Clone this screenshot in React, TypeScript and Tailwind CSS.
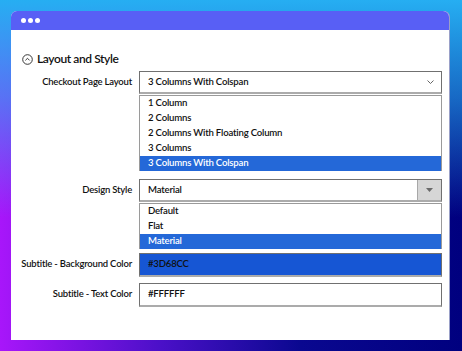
const font = { fontFamily: '"Lato", "Noto Sans", sans-serif' };

function SelectBox({ value, button }: { value: string; button?: boolean }) {
  return (
    <div className="flex h-[23px] items-stretch border border-[#707070] border-b-2 border-b-[#ababab] bg-white">
      <div className="flex flex-1 items-center pl-[8px] text-[9.6px] font-semibold tracking-[-0.2px] text-[#111]">
        {value}
      </div>
      {button ? (
        <div className="flex w-[24px] items-center justify-center border-l border-[#a8a8a8] bg-[#d6d6d6]">
          <svg width="7" height="4" viewBox="0 0 7 4">
            <path d="M0 0h7L3.5 4z" fill="#6a6a6a" />
          </svg>
        </div>
      ) : (
        <div className="flex w-[22px] items-center justify-center">
          <svg width="7" height="4" viewBox="0 0 7 4" fill="none">
            <path d="M0.5 0.5L3.5 3.5L6.5 0.5" stroke="#555" strokeWidth="0.9" />
          </svg>
        </div>
      )}
    </div>
  );
}

function ListBox({ items, selected }: { items: string[]; selected: number }) {
  return (
    <div className="mt-px flex flex-col border-x border-t border-[#9a9a9a] bg-white">
      {items.map((item, i) => (
        <div
          key={item}
          className={
            i === selected
              ? "flex h-[15px] items-center bg-[#2468d8] pl-[8px] text-[9.6px] font-semibold tracking-[-0.2px] text-white"
              : "flex h-[15px] items-center pl-[8px] text-[9.6px] font-semibold tracking-[-0.2px] text-[#111]"
          }
        >
          {item}
        </div>
      ))}
    </div>
  );
}

function Row({ label, children, className }: { label: string; children: React.ReactNode; className?: string }) {
  return (
    <div className={"grid grid-cols-[112px_1fr] gap-x-[7px] " + (className ?? "")}>
      <div className="flex h-[23px] items-center justify-end whitespace-nowrap text-[9.5px] font-semibold tracking-[-0.2px] text-[#111]">
        {label}
      </div>
      <div className="flex flex-col">{children}</div>
    </div>
  );
}

export default function App() {
  return (
    <div
      className="h-[351px] w-[462px] overflow-hidden bg-[linear-gradient(to_bottom,#26aef2_0%,rgba(38,174,242,0.6)_28%,rgba(38,174,242,0)_62%),linear-gradient(to_right,#a816fa_0%,#4a10c8_35%,#0a0890_65%,#00007f_100%)] pt-[11px] pl-[11px]"
      style={font}
    >
      <div className="flex h-[329px] w-[438px] flex-col overflow-hidden rounded-t-[6px] bg-white shadow-[1px_0_0_#9aa0c8]">
        {/* barra de la ventana */}
        <div className="flex h-[19px] items-center gap-[2px] bg-[#585ff5] pl-[10px]">
          <span className="h-[5px] w-[5px] rounded-full bg-white" />
          <span className="h-[5px] w-[5px] rounded-full bg-white" />
          <span className="h-[5px] w-[5px] rounded-full bg-white" />
        </div>

        <div className="flex flex-col pl-[9px] pr-[7px]">
          <div className="mt-[21px] flex items-center gap-[4px] pl-[2px]">
            <svg width="11" height="11" viewBox="0 0 11 11" fill="none">
              <circle cx="5.5" cy="5.5" r="4.8" stroke="#222" strokeWidth="0.9" />
              <path d="M3.4 6.4L5.5 4.3L7.6 6.4" stroke="#222" strokeWidth="0.9" />
            </svg>
            <span className="text-[12px] font-semibold leading-[16px] tracking-[-0.4px] text-[#111]">
              Layout and Style
            </span>
          </div>

          <Row label="Checkout Page Layout" className="mt-[4px]">
            <SelectBox value="3 Columns With Colspan" />
            <ListBox
              items={["1 Column", "2 Columns", "2 Columns With Floating Column", "3 Columns", "3 Columns With Colspan"]}
              selected={4}
            />
          </Row>

          <Row label="Design Style" className="mt-[8px]">
            <SelectBox value="Material" button />
            <ListBox items={["Default", "Flat", "Material"]} selected={2} />
          </Row>

          <Row label="Subtitle - Background Color" className="mt-[4px]">
            <div className="flex h-[24px] items-center border border-[#707070] border-b-2 border-b-[#ababab] bg-[#1656d4] pl-[8px] text-[9.6px] font-semibold tracking-[-0.2px] text-[#111]">
              #3D68CC
            </div>
          </Row>

          <Row label="Subtitle - Text Color" className="mt-[6px]">
            <div className="flex h-[24px] items-center border border-[#707070] border-b-2 border-b-[#ababab] bg-white pl-[8px] text-[9.6px] font-semibold tracking-[-0.2px] text-[#111]">
              #FFFFFF
            </div>
          </Row>
        </div>
      </div>
    </div>
  );
}
